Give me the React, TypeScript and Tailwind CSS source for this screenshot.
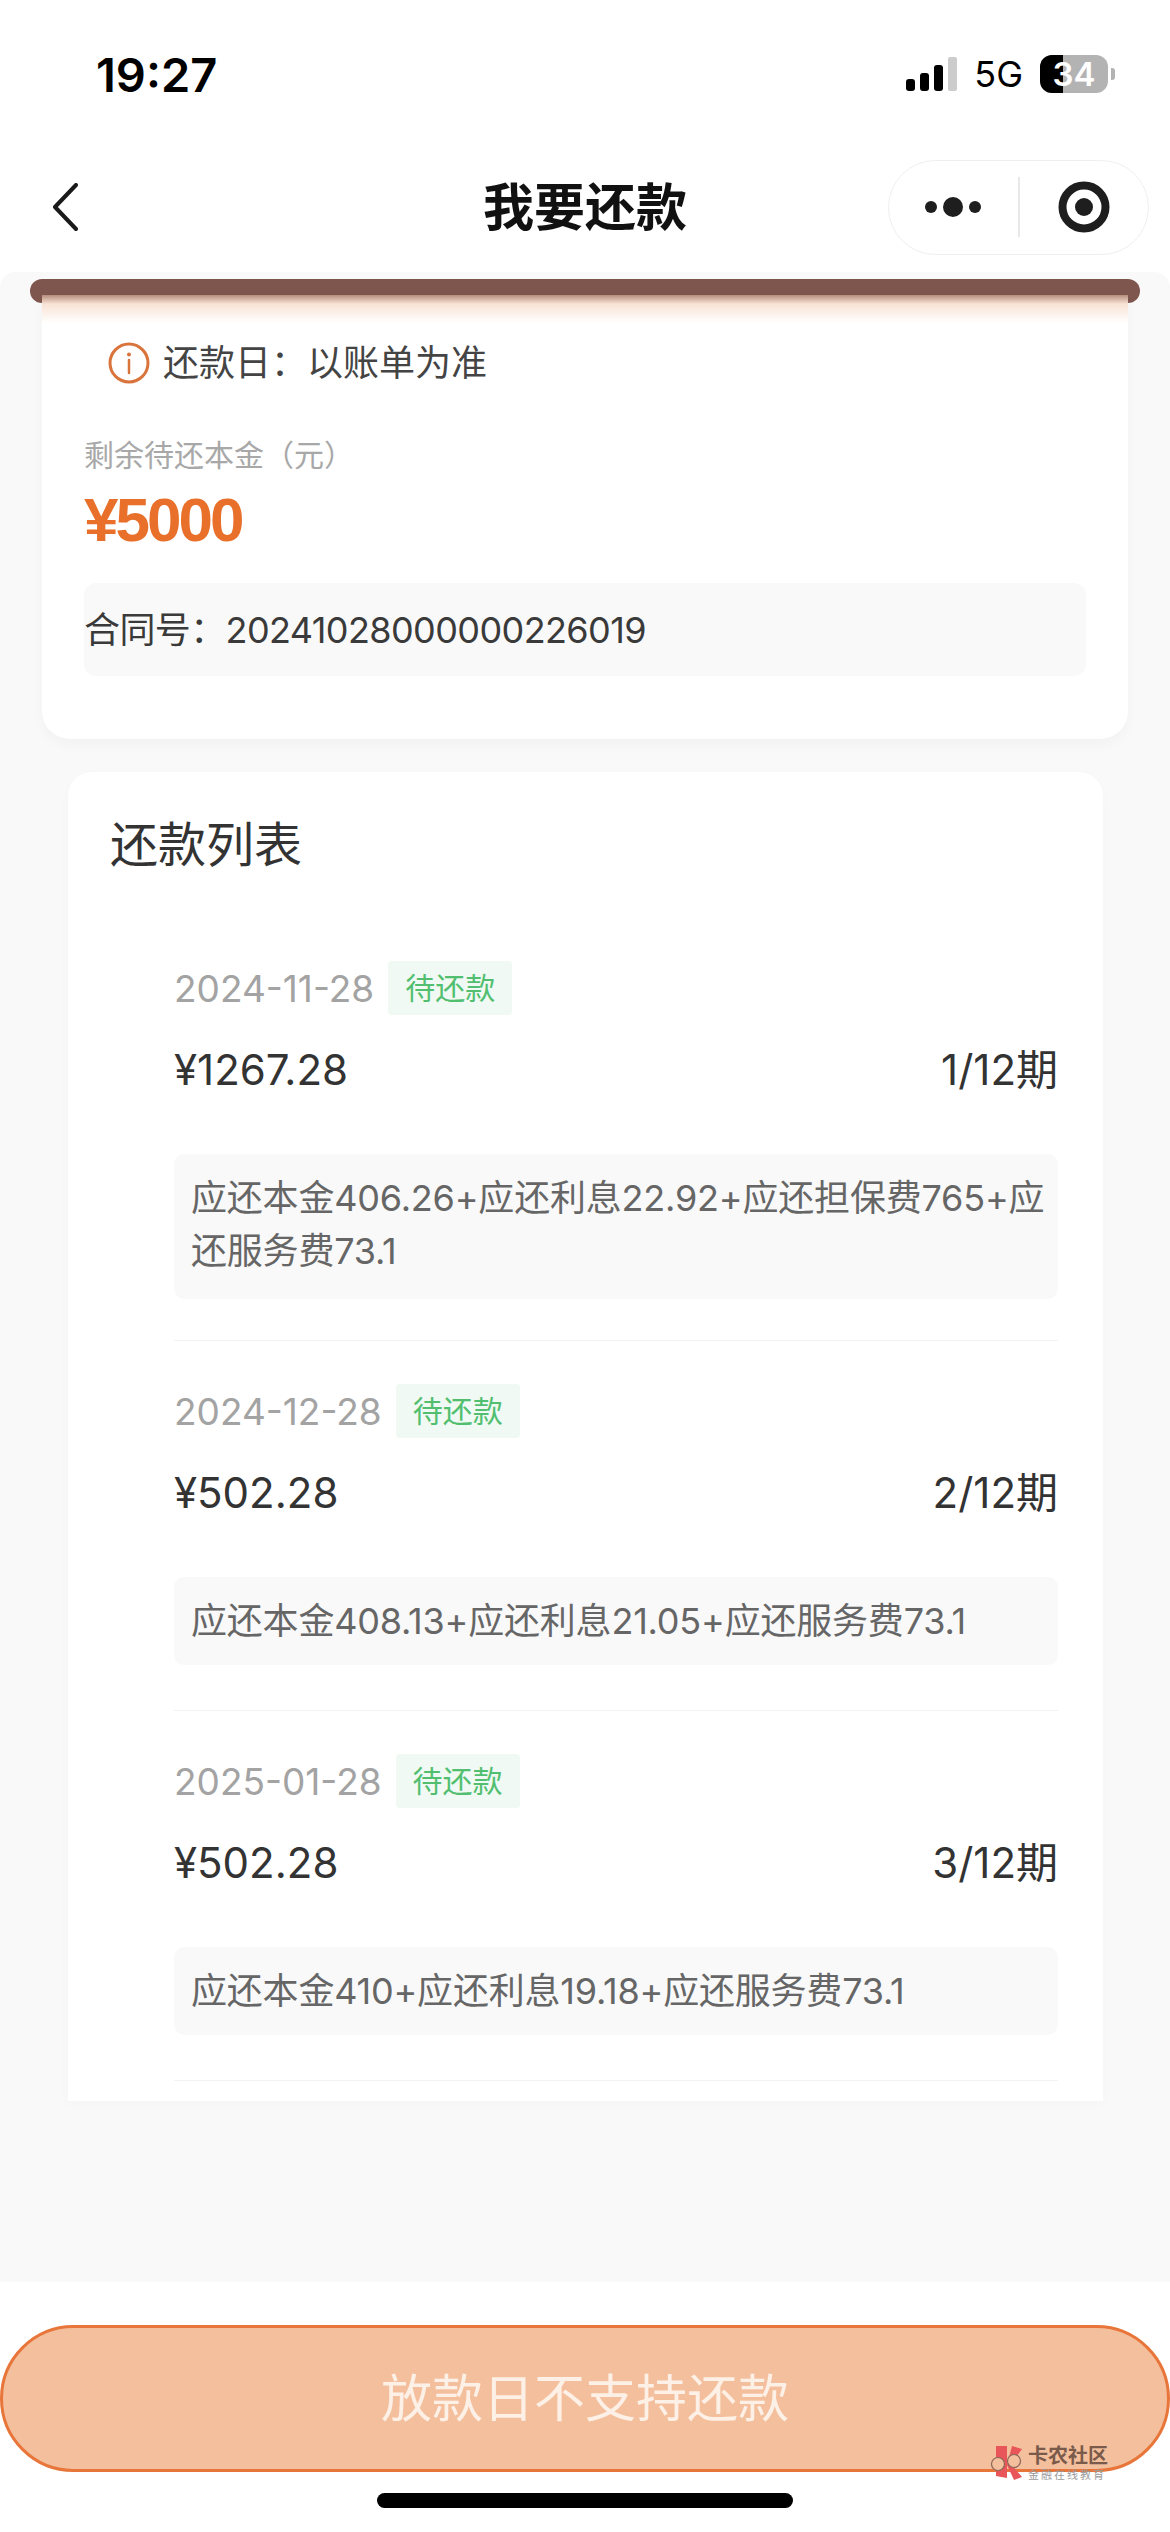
const fontStack = { fontFamily: 'Inter, "Noto Sans CJK SC", sans-serif' };

const rows = [
  {
    date: "2024-11-28",
    amount: "¥1267.28",
    term: "1/12期",
    detail: "应还本金406.26+应还利息22.92+应还担保费765+应还服务费73.1",
    box: "pt-[18px] pb-[21px]",
    gap: "pb-[41px]",
  },
  {
    date: "2024-12-28",
    amount: "¥502.28",
    term: "2/12期",
    detail: "应还本金408.13+应还利息21.05+应还服务费73.1",
    box: "pt-[18px] pb-[17px]",
    gap: "pb-[45px]",
  },
  {
    date: "2025-01-28",
    amount: "¥502.28",
    term: "3/12期",
    detail: "应还本金410+应还利息19.18+应还服务费73.1",
    box: "pt-[18px] pb-[17px]",
    gap: "pb-[45px]",
  },
];

function StatusBar() {
  return (
    <div className="flex h-[148px] items-center justify-between pl-[96px] pr-[55px] text-black">
      <span className="text-[47px] font-semibold leading-none">19:27</span>
      <div className="flex items-center">
        <div className="flex h-[34px] items-end gap-[5px]">
          <div className="h-[12px] w-[9px] rounded-[3px] bg-black" />
          <div className="h-[18px] w-[9px] rounded-[3px] bg-black" />
          <div className="h-[26px] w-[9px] rounded-[3px] bg-black" />
          <div className="h-[34px] w-[9px] rounded-[2px] bg-[#cccccc]" />
        </div>
        <span className="ml-[17px] text-[36px] leading-none">5G</span>
        <div className="relative ml-[17px] flex h-[38px] w-[68px] items-center justify-center overflow-hidden rounded-[12px] bg-[#b3b3b3]">
          <div className="absolute inset-y-0 left-0 w-[23px] bg-black" />
          <span className="relative text-[33px] font-semibold leading-none text-white">34</span>
        </div>
        <div className="ml-[3px] h-[12px] w-[4px] rounded-r-[3px] bg-[#b3b3b3]" />
      </div>
    </div>
  );
}

function NavBar() {
  return (
    <div className="grid h-[118px] grid-cols-[1fr_auto_1fr] items-center">
      <div className="pl-[52px]">
        <svg width="26" height="48" viewBox="0 0 26 48" fill="none" className="block">
          <path d="M24 2 L3 24 L24 46" stroke="#1a1a1a" strokeWidth="4" strokeLinecap="round" strokeLinejoin="round" />
        </svg>
      </div>
      <h1 className="text-[51px] font-bold leading-none text-[#111111]">我要还款</h1>
      <div className="flex justify-end pr-[21px]">
        <div className="flex h-[95px] w-[261px] items-center rounded-full border-[1.5px] border-[#efefef]">
          <div className="flex flex-1 justify-center">
            <svg width="60" height="22" viewBox="0 0 60 22" className="block">
              <circle cx="8" cy="11" r="6" fill="#1e1e1e" />
              <circle cx="30" cy="11" r="10" fill="#1e1e1e" />
              <circle cx="52" cy="11" r="6" fill="#1e1e1e" />
            </svg>
          </div>
          <div className="h-[60px] w-[2px] bg-[#e8e8e8]" />
          <div className="flex flex-1 justify-center">
            <svg width="52" height="52" viewBox="0 0 52 52" fill="none" className="block">
              <circle cx="26" cy="26" r="21.5" stroke="#1e1e1e" strokeWidth="8" />
              <circle cx="26" cy="26" r="9" fill="#1e1e1e" />
            </svg>
          </div>
        </div>
      </div>
    </div>
  );
}

function SummaryCard() {
  return (
    <div className="px-[30px] pt-[7px]">
      <div className="h-[24px] rounded-full bg-[#7f564e]" />
      <div className="relative mx-[12px] -mt-[8px] rounded-b-[28px] bg-[linear-gradient(#b58d7d_0px,#f9e3d5_9px,#ffffff_28px)] px-[42px] pb-[63px] pt-[47px] shadow-[0_6px_14px_rgba(0,0,0,0.03)]">
        <div className="flex items-center pl-[24px]">
          <svg width="42" height="42" viewBox="0 0 42 42" fill="none" className="block">
            <circle cx="21" cy="21" r="19" stroke="#d9743c" strokeWidth="3" />
            <circle cx="21" cy="12.5" r="2" fill="#d9743c" />
            <path d="M21 18 V31" stroke="#d9743c" strokeWidth="2.5" strokeLinecap="round" />
          </svg>
          <span className="ml-[13px] text-[36px] leading-none text-[#444444]">还款日：以账单为准</span>
        </div>
        <div className="mt-[51px] text-[30px] leading-[40px] text-[#a8a8a8]">剩余待还本金（元）</div>
        <div className="mt-[10px] font-['Liberation_Sans'] text-[62px] font-bold leading-[70px] tracking-[-3px] text-[#e8702a]">¥5000</div>
        <div className="mt-[28px] flex h-[93px] items-center rounded-[12px] bg-[#f9f9f9] text-[36px] tracking-[-0.6px] text-[#3a3a3a]">
          合同号：20241028000000226019
        </div>
      </div>
    </div>
  );
}

function RepayRow({ date, amount, term, detail, box, gap }: (typeof rows)[number]) {
  return (
    <div className={`border-b border-[#f2f2f2] pt-[43px] first:pt-0 ${gap}`}>
      <div className="flex items-center">
        <span className="text-[37px] leading-none text-[#a3a3a3]">{date}</span>
        <span className="ml-[14px] flex h-[54px] w-[124px] items-center justify-center rounded-[4px] bg-[#f0f9f3] text-[30px] leading-none text-[#52bf70]">
          待还款
        </span>
      </div>
      <div className="mt-[30px] flex items-center justify-between text-[42px] leading-[50px] text-[#333333]">
        <span>{amount}</span>
        <span>{term}</span>
      </div>
      <div className={`mt-[59px] rounded-[10px] bg-[#f9f9f9] pl-[17px] pr-[8px] text-[36px] leading-[53px] tracking-[-0.2px] text-[#666666] ${box}`}>
        {detail}
      </div>
    </div>
  );
}

function RepayList() {
  return (
    <div className="ml-[68px] mr-[67px] mt-[33px] h-[1329px] overflow-hidden rounded-t-[24px] bg-white pt-[43px] shadow-[0_4px_14px_rgba(0,0,0,0.02)]">
      <h2 className="pl-[42px] text-[48px] font-normal leading-[60px] text-[#333333]">还款列表</h2>
      <div className="mt-[86px] pl-[106px] pr-[45px]">
        {rows.map((row) => (
          <RepayRow key={row.date} {...row} />
        ))}
      </div>
    </div>
  );
}

function Watermark() {
  return (
    <div className="absolute left-[990px] top-[2445px] flex items-center">
      <svg width="36" height="36" viewBox="0 0 36 36" className="block">
        <path d="M6 1 L17 1 L17 33 L6 31 Z" fill="#e8565a" />
        <path d="M22 1 L32 4 L21 19 L32 32 L24 35 L17 20 Z" fill="#e8565a" />
        <circle cx="8" cy="19" r="6.5" fill="#f4bf9c" stroke="#8a6658" strokeWidth="1.2" />
        <circle cx="24" cy="16" r="6.5" fill="#f4bf9c" stroke="#8a6658" strokeWidth="1.2" />
      </svg>
      <div className="ml-[2px] flex flex-col">
        <span className="text-[20px] font-bold leading-[22px] text-[#7a5a4a]">卡农社区</span>
        <span className="mt-[2px] text-[11px] leading-[12px] tracking-[2px] text-[#9a9a9a]">金融在线教育</span>
      </div>
    </div>
  );
}

export default function App() {
  return (
    <div className="relative flex h-[2532px] w-[1170px] flex-col overflow-hidden bg-white" style={fontStack}>
      <div className="h-[272px]">
        <StatusBar />
        <NavBar />
      </div>
      <main className="h-[2010px] overflow-hidden rounded-t-[16px] bg-[#f9f9f9]">
        <SummaryCard />
        <RepayList />
      </main>
      <footer className="flex-1 pt-[43px]">
        <button className="flex h-[147px] w-full items-center justify-center rounded-[74px] border-[3px] border-[#e8763a] bg-[#f4bf9c] text-[51px] leading-none text-[#fdf0e6]">
          放款日不支持还款
        </button>
        <div className="mx-auto mt-[21px] h-[15px] w-[416px] rounded-full bg-black" />
      </footer>
      <Watermark />
    </div>
  );
}
